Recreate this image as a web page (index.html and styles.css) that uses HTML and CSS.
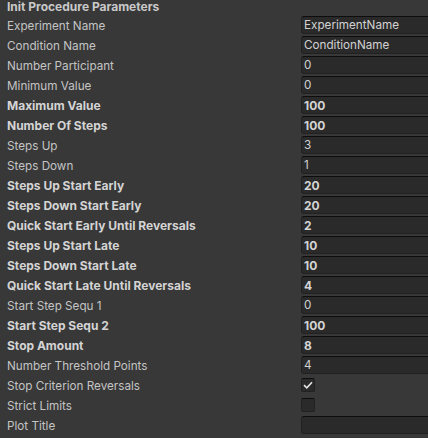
FILE: index.html
```html
<!DOCTYPE html>
<html>
<head>
<meta charset="utf-8">
<link rel="stylesheet" href="styles.css">
</head>
<body>
<div class="inspector">
  <div class="header">Init Procedure Parameters</div>
  <div class="row"><span class="label">Experiment Name</span><span class="field">ExperimentName</span></div>
  <div class="row"><span class="label">Condition Name</span><span class="field">ConditionName</span></div>
  <div class="row"><span class="label">Number Participant</span><span class="field">0</span></div>
  <div class="row"><span class="label">Minimum Value</span><span class="field">0</span></div>
  <div class="row bold"><span class="label">Maximum Value</span><span class="field">100</span></div>
  <div class="row bold"><span class="label">Number Of Steps</span><span class="field">100</span></div>
  <div class="row"><span class="label">Steps Up</span><span class="field">3</span></div>
  <div class="row"><span class="label">Steps Down</span><span class="field">1</span></div>
  <div class="row bold"><span class="label">Steps Up Start Early</span><span class="field">20</span></div>
  <div class="row bold"><span class="label">Steps Down Start Early</span><span class="field">20</span></div>
  <div class="row bold"><span class="label">Quick Start Early Until Reversals</span><span class="field">2</span></div>
  <div class="row bold"><span class="label">Steps Up Start Late</span><span class="field">10</span></div>
  <div class="row bold"><span class="label">Steps Down Start Late</span><span class="field">10</span></div>
  <div class="row bold"><span class="label">Quick Start Late Until Reversals</span><span class="field">4</span></div>
  <div class="row"><span class="label">Start Step Sequ 1</span><span class="field">0</span></div>
  <div class="row bold"><span class="label">Start Step Sequ 2</span><span class="field">100</span></div>
  <div class="row bold"><span class="label">Stop Amount</span><span class="field">8</span></div>
  <div class="row"><span class="label">Number Threshold Points</span><span class="field">4</span></div>
  <div class="row"><span class="label">Stop Criterion Reversals</span><span class="check"><svg width="10" height="8" viewBox="0 0 10 8"><path d="M1 4.2 L3.8 6.8 L9 1.2" fill="none" stroke="#e4e4e4" stroke-width="1.6"/></svg></span></div>
  <div class="row"><span class="label">Strict Limits</span><span class="check"></span></div>
  <div class="row"><span class="label">Plot Title</span><span class="field"></span></div>
</div>
</body>
</html>
```
FILE: styles.css
```css
html, body {
  margin: 0;
  padding: 0;
  background: #383838;
}
.inspector {
  width: 428px;
  height: 438px;
  overflow: hidden;
  font-family: Inter, "Liberation Sans", sans-serif;
  font-size: 11.7px;
  color: #c4c4c4;
}
.header {
  height: 15px;
  line-height: 15px;
  padding-left: 7px;
  font-size: 12px;
  font-weight: bold;
  color: #c9c9c9;
  margin-top: -1px;
  margin-bottom: 1px;
}
.row {
  display: flex;
  align-items: center;
  height: 20px;
}
.label {
  width: 294px;
  padding-left: 7px;
  padding-top: 1px;
  line-height: 18px;
  flex: none;
  white-space: nowrap;
}
.bold .label, .bold .field {
  font-size: 12px;
  font-weight: bold;
  color: #d4d4d4;
}
.field {
  flex: none;
  width: 140px;
  height: 18px;
  box-sizing: border-box;
  background: #2a2a2a;
  border: 1px solid #212121;
  border-top-color: #0d0d0d;
  border-radius: 3px;
  padding-left: 2px;
  padding-top: 1px;
  line-height: 15px;
  color: #d2d2d2;
}
.check {
  flex: none;
  width: 14px;
  height: 14px;
  box-sizing: border-box;
  background: #2a2a2a;
  border: 1px solid #212121;
  border-top-color: #0d0d0d;
  border-radius: 2px;
  display: flex;
  align-items: center;
  justify-content: center;
}
```
